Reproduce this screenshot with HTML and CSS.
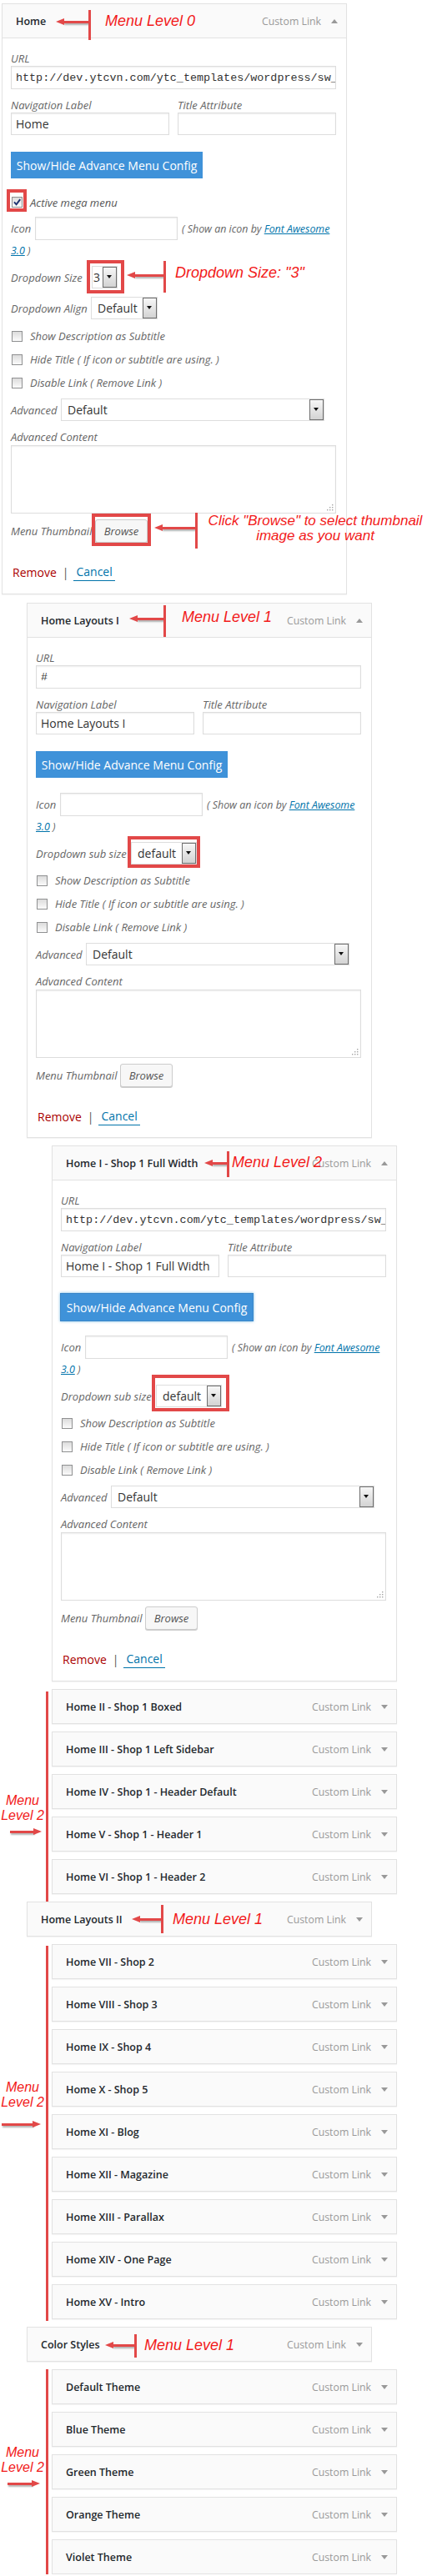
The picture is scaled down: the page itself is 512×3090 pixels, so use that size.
FILE: index.html
```html
<!DOCTYPE html>
<html>
<head>
<meta charset="utf-8">
<title>Menu structure</title>
<link rel="stylesheet" href="styles.css">
</head>
<body>
<div class="menu">

  <div class="item lvl0 open card0">
    <div class="item-head"><span class="item-title">Home</span><span class="item-type">Custom Link</span><span class="toggle up"></span></div>
    <div class="item-body">
      <div class="flabel">URL</div>
      <div class="input url">http://dev.ytcvn.com/ytc_templates/wordpress/sw_emarket/</div>
      <div class="pair">
        <div><div class="flabel">Navigation Label</div><div class="input">Home</div></div>
        <div><div class="flabel">Title Attribute</div><div class="input"></div></div>
      </div>
      <div class="btn-adv">Show/Hide Advance Menu Config</div>
      <div class="check-row mega"><span class="hl-wrap"><span class="cb"><svg viewBox="0 0 11 11" width="11" height="11"><path d="M2 5.4 L4.6 8.3 L9.2 2.2" fill="none" stroke="#1d3270" stroke-width="2"/></svg></span><span class="hl hl-cb"></span></span><span class="cb-text">Active mega menu</span></div>
      <div class="icon-row after-mega"><span class="rlabel w-icon">Icon</span><span class="input icon-input"></span><span class="hint">( Show an icon by <a class="link">Font Awesome</a></span></div>
      <div class="hint-line"><a class="link">3.0</a> )</div>
      <div class="sel-row"><span class="rlabel w-size">Dropdown Size</span><span class="hl-wrap"><span class="select s-size">3<i class="sel-btn"></i></span><span class="hl hl-size"></span></span></div>
      <div class="sel-row align-row"><span class="rlabel w-align">Dropdown Align</span><span class="select s-align">Default<i class="sel-btn"></i></span></div>
      <div class="checks after-align">
        <div class="check-row"><span class="cb"></span><span class="cb-text">Show Description as Subtitle</span></div>
        <div class="check-row"><span class="cb"></span><span class="cb-text">Hide Title ( If icon or subtitle are using. )</span></div>
        <div class="check-row"><span class="cb"></span><span class="cb-text">Disable Link ( Remove Link )</span></div>
      </div>
      <div class="sel-row adv-row"><span class="rlabel w-adv">Advanced</span><span class="select s-adv">Default<i class="sel-btn"></i></span></div>
      <div class="flabel ac-label">Advanced Content</div>
      <div class="textarea"><svg class="grip" viewBox="0 0 8 8" width="8" height="8"><rect x="6" y="0" width="1.4" height="1.4"/><rect x="3" y="3" width="1.4" height="1.4"/><rect x="6" y="3" width="1.4" height="1.4"/><rect x="0" y="6" width="1.4" height="1.4"/><rect x="3" y="6" width="1.4" height="1.4"/><rect x="6" y="6" width="1.4" height="1.4"/></svg></div>
      <div class="thumb-row"><span class="rlabel w-thumb">Menu Thumbnail</span><span class="hl-wrap"><span class="btn-browse">Browse</span><span class="hl hl-browse"></span></span></div>
      <div class="actions"><a class="remove">Remove</a><span class="sep">|</span><a class="cancel">Cancel</a></div>
    </div>
    <span class="arrow a-h0"><i class="shaft"></i></span>
    <span class="note n-h0">Menu Level 0</span>
    <span class="arrow a-size"><i class="shaft"></i></span>
    <span class="note n-size">Dropdown Size: "3"</span>
    <span class="arrow a-browse"><i class="shaft"></i></span>
    <span class="note n-browse">Click "Browse" to select thumbnail<br>image as you want</span>
  </div>

  <div class="item lvl1 open card1">
    <div class="item-head"><span class="item-title">Home Layouts I</span><span class="item-type">Custom Link</span><span class="toggle up"></span></div>
    <div class="item-body">
      <div class="flabel">URL</div>
      <div class="input url">#</div>
      <div class="pair">
        <div><div class="flabel">Navigation Label</div><div class="input">Home Layouts I</div></div>
        <div><div class="flabel">Title Attribute</div><div class="input"></div></div>
      </div>
      <div class="btn-adv">Show/Hide Advance Menu Config</div>
      <div class="icon-row"><span class="rlabel w-icon">Icon</span><span class="input icon-input"></span><span class="hint">( Show an icon by <a class="link">Font Awesome</a></span></div>
      <div class="hint-line"><a class="link">3.0</a> )</div>
      <div class="sel-row"><span class="rlabel w-sub">Dropdown sub size</span><span class="hl-wrap"><span class="select s-sub">default<i class="sel-btn"></i></span><span class="hl hl-sub1"></span></span></div>
      <div class="checks">
        <div class="check-row"><span class="cb"></span><span class="cb-text">Show Description as Subtitle</span></div>
        <div class="check-row"><span class="cb"></span><span class="cb-text">Hide Title ( If icon or subtitle are using. )</span></div>
        <div class="check-row"><span class="cb"></span><span class="cb-text">Disable Link ( Remove Link )</span></div>
      </div>
      <div class="sel-row adv-row"><span class="rlabel w-adv">Advanced</span><span class="select s-adv">Default<i class="sel-btn"></i></span></div>
      <div class="flabel ac-label">Advanced Content</div>
      <div class="textarea"><svg class="grip" viewBox="0 0 8 8" width="8" height="8"><rect x="6" y="0" width="1.4" height="1.4"/><rect x="3" y="3" width="1.4" height="1.4"/><rect x="6" y="3" width="1.4" height="1.4"/><rect x="0" y="6" width="1.4" height="1.4"/><rect x="3" y="6" width="1.4" height="1.4"/><rect x="6" y="6" width="1.4" height="1.4"/></svg></div>
      <div class="thumb-row"><span class="rlabel w-thumb">Menu Thumbnail</span><span class="btn-browse">Browse</span></div>
      <div class="actions"><a class="remove">Remove</a><span class="sep">|</span><a class="cancel">Cancel</a></div>
    </div>
    <span class="arrow a-h1"><i class="shaft"></i></span>
    <span class="note n-h1">Menu Level 1</span>
  </div>

  <div class="item lvl2 open card2">
    <div class="item-head"><span class="item-title">Home I - Shop 1 Full Width</span><span class="item-type">Custom Link</span><span class="toggle up"></span></div>
    <div class="item-body">
      <div class="flabel">URL</div>
      <div class="input url">http://dev.ytcvn.com/ytc_templates/wordpress/sw_emarket/</div>
      <div class="pair">
        <div><div class="flabel">Navigation Label</div><div class="input">Home I - Shop 1 Full Width</div></div>
        <div><div class="flabel">Title Attribute</div><div class="input"></div></div>
      </div>
      <div class="btn-adv focused">Show/Hide Advance Menu Config</div>
      <div class="icon-row"><span class="rlabel w-icon">Icon</span><span class="input icon-input"></span><span class="hint">( Show an icon by <a class="link">Font Awesome</a></span></div>
      <div class="hint-line"><a class="link">3.0</a> )</div>
      <div class="sel-row"><span class="rlabel w-sub">Dropdown sub size</span><span class="hl-wrap"><span class="select s-sub">default<i class="sel-btn"></i></span><span class="hl hl-sub2"></span></span></div>
      <div class="checks">
        <div class="check-row"><span class="cb"></span><span class="cb-text">Show Description as Subtitle</span></div>
        <div class="check-row"><span class="cb"></span><span class="cb-text">Hide Title ( If icon or subtitle are using. )</span></div>
        <div class="check-row"><span class="cb"></span><span class="cb-text">Disable Link ( Remove Link )</span></div>
      </div>
      <div class="sel-row adv-row"><span class="rlabel w-adv">Advanced</span><span class="select s-adv">Default<i class="sel-btn"></i></span></div>
      <div class="flabel ac-label">Advanced Content</div>
      <div class="textarea"><svg class="grip" viewBox="0 0 8 8" width="8" height="8"><rect x="6" y="0" width="1.4" height="1.4"/><rect x="3" y="3" width="1.4" height="1.4"/><rect x="6" y="3" width="1.4" height="1.4"/><rect x="0" y="6" width="1.4" height="1.4"/><rect x="3" y="6" width="1.4" height="1.4"/><rect x="6" y="6" width="1.4" height="1.4"/></svg></div>
      <div class="thumb-row"><span class="rlabel w-thumb">Menu Thumbnail</span><span class="btn-browse">Browse</span></div>
      <div class="actions"><a class="remove">Remove</a><span class="sep">|</span><a class="cancel">Cancel</a></div>
    </div>
    <span class="arrow a-h2"><i class="shaft"></i></span>
    <span class="note n-h2">Menu Level 2</span>
  </div>

  <div class="group g1">
    <span class="side-note sn1">Menu<br>Level 2</span>
    <span class="rarrow ra1"></span>
    <div class="item lvl2"><div class="item-head"><span class="item-title">Home II - Shop 1 Boxed</span><span class="item-type">Custom Link</span><span class="toggle"></span></div></div>
    <div class="item lvl2"><div class="item-head"><span class="item-title">Home III - Shop 1 Left Sidebar</span><span class="item-type">Custom Link</span><span class="toggle"></span></div></div>
    <div class="item lvl2"><div class="item-head"><span class="item-title">Home IV - Shop 1 - Header Default</span><span class="item-type">Custom Link</span><span class="toggle"></span></div></div>
    <div class="item lvl2"><div class="item-head"><span class="item-title">Home V - Shop 1 - Header 1</span><span class="item-type">Custom Link</span><span class="toggle"></span></div></div>
    <div class="item lvl2"><div class="item-head"><span class="item-title">Home VI - Shop 1 - Header 2</span><span class="item-type">Custom Link</span><span class="toggle"></span></div></div>
  </div>

  <div class="item lvl1 layouts2">
    <div class="item-head"><span class="item-title">Home Layouts II</span><span class="item-type">Custom Link</span><span class="toggle"></span></div>
    <span class="arrow a-l2"><i class="shaft"></i></span>
    <span class="note n-l2">Menu Level 1</span>
  </div>

  <div class="group g2">
    <span class="side-note sn2">Menu<br>Level 2</span>
    <span class="rarrow ra2"></span>
    <div class="item lvl2"><div class="item-head"><span class="item-title">Home VII - Shop 2</span><span class="item-type">Custom Link</span><span class="toggle"></span></div></div>
    <div class="item lvl2"><div class="item-head"><span class="item-title">Home VIII - Shop 3</span><span class="item-type">Custom Link</span><span class="toggle"></span></div></div>
    <div class="item lvl2"><div class="item-head"><span class="item-title">Home IX - Shop 4</span><span class="item-type">Custom Link</span><span class="toggle"></span></div></div>
    <div class="item lvl2"><div class="item-head"><span class="item-title">Home X - Shop 5</span><span class="item-type">Custom Link</span><span class="toggle"></span></div></div>
    <div class="item lvl2"><div class="item-head"><span class="item-title">Home XI - Blog</span><span class="item-type">Custom Link</span><span class="toggle"></span></div></div>
    <div class="item lvl2"><div class="item-head"><span class="item-title">Home XII - Magazine</span><span class="item-type">Custom Link</span><span class="toggle"></span></div></div>
    <div class="item lvl2"><div class="item-head"><span class="item-title">Home XIII - Parallax</span><span class="item-type">Custom Link</span><span class="toggle"></span></div></div>
    <div class="item lvl2"><div class="item-head"><span class="item-title">Home XIV - One Page</span><span class="item-type">Custom Link</span><span class="toggle"></span></div></div>
    <div class="item lvl2"><div class="item-head"><span class="item-title">Home XV - Intro</span><span class="item-type">Custom Link</span><span class="toggle"></span></div></div>
  </div>

  <div class="item lvl1 colors">
    <div class="item-head"><span class="item-title">Color Styles</span><span class="item-type">Custom Link</span><span class="toggle"></span></div>
    <span class="arrow a-cs"><i class="shaft"></i></span>
    <span class="note n-cs">Menu Level 1</span>
  </div>

  <div class="group g3">
    <span class="side-note sn3">Menu<br>Level 2</span>
    <span class="rarrow ra3"></span>
    <div class="item lvl2"><div class="item-head"><span class="item-title">Default Theme</span><span class="item-type">Custom Link</span><span class="toggle"></span></div></div>
    <div class="item lvl2"><div class="item-head"><span class="item-title">Blue Theme</span><span class="item-type">Custom Link</span><span class="toggle"></span></div></div>
    <div class="item lvl2"><div class="item-head"><span class="item-title">Green Theme</span><span class="item-type">Custom Link</span><span class="toggle"></span></div></div>
    <div class="item lvl2"><div class="item-head"><span class="item-title">Orange Theme</span><span class="item-type">Custom Link</span><span class="toggle"></span></div></div>
    <div class="item lvl2"><div class="item-head"><span class="item-title">Violet Theme</span><span class="item-type">Custom Link</span><span class="toggle"></span></div></div>
  </div>

</div>
</body>
</html>
```

FILE: styles.css
```css
* { box-sizing: border-box; }

body {
  margin: 0;
  background: #fff;
  font-family: "Open Sans", "Liberation Sans", sans-serif;
  color: #333;
}

.menu {
  width: 512px;
  padding-top: 4px;
}

/* ---------- menu item card ---------- */
.item {
  position: relative;
  width: 414px;
  margin-top: 9px;
  border: 1px solid #e2e2e2;
  background: #fff;
  box-shadow: 0 1px 1px rgba(0, 0, 0, 0.04);
}
.card0 { margin-top: 0; }
.card1 { margin-top: 10px; }

.lvl0 { margin-left: 2px; }
.lvl1 { margin-left: 32px; }
.lvl2 { margin-left: 62px; }

.item-head {
  height: 40px;
  display: flex;
  align-items: center;
  padding: 0 10px 0 16px;
  background: #fafafa;
}
.open > .item-head {
  height: 41px;
  border-bottom: 1px solid #e2e2e2;
}
.item-title {
  flex: 1;
  font-size: 12.5px;
  font-weight: 600;
  color: #23282d;
  white-space: nowrap;
}
.item-type {
  font-size: 12.3px;
  color: #999;
  white-space: nowrap;
}
.toggle {
  width: 0;
  height: 0;
  margin-left: 12px;
  border-left: 4px solid transparent;
  border-right: 4px solid transparent;
  border-top: 5px solid #999;
}
.toggle.up {
  border-top: 0;
  border-bottom: 5px solid #999;
}

/* ---------- body / settings ---------- */
.item-body {
  padding: 15px 12px 16px 10px;
}
.card0 .item-body,
.card2 .item-body { padding-bottom: 17px; }

.flabel {
  height: 18px;
  line-height: 18px;
  font-size: 13px;
  font-style: italic;
  color: #666;
  white-space: nowrap;
}

.input {
  height: 28px;
  display: flex;
  align-items: center;
  padding: 0 5px;
  border: 1px solid #ddd;
  background: #fff;
  box-shadow: inset 0 1px 2px rgba(0, 0, 0, 0.07);
  font-size: 14px;
  color: #333;
  white-space: nowrap;
  overflow: hidden;
}
.input.url {
  font-family: "Liberation Mono", "DejaVu Sans Mono", monospace;
  font-size: 13.4px;
}

.pair {
  display: grid;
  grid-template-columns: 190px 190px;
  column-gap: 10px;
  margin-top: 10px;
}
.pair .input { height: 27px; }

.btn-adv {
  width: 230px;
  height: 32px;
  margin-top: 20px;
  display: flex;
  align-items: center;
  justify-content: center;
  background: #3f92d9;
  color: #fff;
  font-size: 14px;
  white-space: nowrap;
}
.btn-adv.focused {
  box-shadow: 0 0 0 1px #3a86c8, 0 0 3px 1px rgba(30, 140, 210, 0.6);
}

.rlabel {
  flex: none;
  font-size: 13px;
  font-style: italic;
  color: #666;
  white-space: nowrap;
}
.w-icon { width: 29px; }
.w-size { width: 97px; }
.w-align { width: 96px; }
.w-sub { width: 114px; }
.w-adv { width: 60px; }
.w-thumb { width: 101px; }

/* checkboxes */
.check-row {
  height: 28px;
  display: flex;
  align-items: center;
}
.check-row.mega {
  height: 21px;
  margin-top: 18px;
}
.cb {
  flex: none;
  width: 13px;
  height: 13px;
  margin-left: 1px;
  border: 1px solid #8f9091;
  background: linear-gradient(#dcdcdc, #fbfbfb);
  display: flex;
  align-items: center;
  justify-content: center;
}
.cb-text {
  margin-left: 9px;
  font-size: 13px;
  font-style: italic;
  color: #666;
  white-space: nowrap;
}
.mega .cb-text { color: #555; }
.checks { margin-top: 5px; }
.checks.after-align { margin-top: 6px; }

/* icon row */
.icon-row {
  height: 28px;
  margin-top: 18px;
  display: flex;
  align-items: center;
}
.icon-row.after-mega { margin-top: 7px; }
.icon-input {
  width: 171px;
  flex: none;
}
.hint {
  margin-left: 5px;
  font-size: 12.4px;
  font-style: italic;
  color: #666;
  white-space: nowrap;
}
.hint-line {
  height: 18px;
  margin-top: 4px;
  line-height: 18px;
  font-size: 12.4px;
  font-style: italic;
  color: #666;
}
.link {
  color: #0073aa;
  text-decoration: underline;
}

/* selects */
.sel-row {
  height: 27px;
  margin-top: 9px;
  display: flex;
  align-items: center;
}
.align-row { margin-top: 10px; }
.adv-row { margin-top: 5px; }

.select {
  position: relative;
  height: 27px;
  display: flex;
  align-items: center;
  padding-left: 7px;
  border: 1px solid #ddd;
  background: #fff;
  font-size: 14px;
  color: #333;
  white-space: nowrap;
}
.s-size { width: 31px; padding-left: 1px; }
.s-align { width: 80px; }
.s-sub { width: 79px; }
.s-adv { width: 316px; }

.sel-btn {
  position: absolute;
  right: 0;
  top: 0;
  bottom: 0;
  width: 17px;
  border: 1px solid #6e6e6e;
  background: linear-gradient(#f7f7f7, #d3d3d3);
}
.sel-btn::after {
  content: "";
  position: absolute;
  left: 4px;
  top: 9px;
  border-left: 3.5px solid transparent;
  border-right: 3.5px solid transparent;
  border-top: 4px solid #111;
}

/* textarea */
.ac-label { margin-top: 10px; }
.textarea {
  position: relative;
  height: 82px;
  margin-top: 1px;
  border: 1px solid #ddd;
  box-shadow: inset 0 1px 2px rgba(0, 0, 0, 0.07);
}
.grip {
  position: absolute;
  right: 2px;
  bottom: 2px;
  fill: #a5a5a5;
}

/* thumbnail */
.thumb-row {
  height: 28px;
  margin-top: 7px;
  display: flex;
  align-items: center;
}
.btn-browse {
  width: 63px;
  height: 28px;
  display: flex;
  align-items: center;
  justify-content: center;
  border: 1px solid #ccc;
  border-radius: 3px;
  background: #f7f7f7;
  box-shadow: 0 1px 0 #ccc;
  font-size: 13px;
  font-style: italic;
  color: #555;
}

/* actions */
.actions {
  height: 18px;
  margin-top: 26px;
  padding-left: 2px;
  display: flex;
  align-items: center;
  font-size: 14px;
}
.remove { color: #a00; }
.sep { margin: 0 6px 0 7px; color: #555; }
.cancel {
  padding: 0 3px 1px;
  color: #0073aa;
  border-bottom: 1px solid #0073aa;
}

/* ---------- annotations (drawn over the UI) ---------- */
.hl-wrap {
  position: relative;
  display: inline-flex;
  flex: none;
}
.hl {
  position: absolute;
  border: 4px solid #e24848;
}
.hl-cb { top: -9px; left: -5px; right: -5px; bottom: -5px; }
.hl-size { top: -7px; left: -6px; right: -8px; bottom: -6px; }
.hl-sub1 { top: -7px; left: -4px; right: -4px; bottom: -4px; }
.hl-sub2 { top: -12px; left: -5px; right: -9px; bottom: -5px; }
.hl-browse { top: -7px; left: -4px; right: -4px; bottom: -4px; }

.note {
  position: absolute;
  font-family: "Liberation Sans", Arial, sans-serif;
  font-style: italic;
  font-size: 18px;
  line-height: 18px;
  color: #f21a1a;
  white-space: nowrap;
}
.n-h0 { left: 123px; top: 11px; }
.n-size { left: 207px; top: 313px; }
.n-browse { left: 246px; top: 611px; width: 258px; text-align: center; font-size: 17px; }
.n-h1 { left: 185px; top: 7px; }
.n-h2 { left: 215px; top: 10px; }
.n-l2 { left: 174px; top: 11px; }
.n-cs { left: 140px; top: 12px; }

/* left-pointing arrow with a vertical bar at its tail */
.arrow { position: absolute; }
.arrow::after {
  content: "";
  position: absolute;
  right: 0;
  top: 0;
  bottom: 0;
  width: 3px;
  background: #e24848;
}
.shaft {
  position: absolute;
  left: 9px;
  right: 3px;
  height: 3px;
  background: #e24848;
  box-shadow: 1px 2px 2px rgba(0, 0, 0, 0.3);
}
.shaft::before {
  content: "";
  position: absolute;
  left: -9px;
  top: -3px;
  border-right: 10px solid #e24848;
  border-top: 4.5px solid transparent;
  border-bottom: 4.5px solid transparent;
}
.a-h0 { left: 64px; top: 7px; width: 42px; height: 36px; }
.a-h0 .shaft { top: 13px; }
.a-size { left: 149px; top: 308px; width: 47px; height: 38px; }
.a-size .shaft { top: 16px; }
.a-browse { left: 182px; top: 610px; width: 52px; height: 43px; }
.a-browse .shaft { top: 17px; }
.a-h1 { left: 122px; top: 2px; width: 44px; height: 38px; }
.a-h1 .shaft { top: 15px; }
.a-h2 { left: 182px; top: 6px; width: 30px; height: 31px; }
.a-h2 .shaft { top: 13px; }
.a-l2 { left: 125px; top: 3px; width: 38px; height: 34px; }
.a-l2 .shaft { top: 16px; }
.a-cs { left: 93px; top: 8px; width: 38px; height: 28px; }
.a-cs .shaft { top: 12px; }

/* level-2 groups with bracket bar on the left */
.group { position: relative; }
.group::before {
  content: "";
  position: absolute;
  left: 55px;
  width: 3px;
  background: #e24848;
}
.g1::before { top: 3px; bottom: -14px; }
.g2::before { top: 2px; bottom: -2px; }
.g3::before { top: 0; bottom: 0; }

.side-note {
  position: absolute;
  left: 0;
  width: 54px;
  text-align: center;
  font-family: "Liberation Sans", Arial, sans-serif;
  font-style: italic;
  font-size: 16px;
  line-height: 18px;
  color: #f21a1a;
}
.sn1 { top: 125px; }
.sn2 { top: 163px; }
.sn3 { top: 91px; }

.rarrow {
  position: absolute;
  height: 9px;
}
.rarrow::before {
  content: "";
  position: absolute;
  left: 0;
  right: 9px;
  top: 3px;
  height: 3px;
  background: #e24848;
  box-shadow: 1px 2px 2px rgba(0, 0, 0, 0.3);
}
.rarrow::after {
  content: "";
  position: absolute;
  right: 0;
  top: 0;
  border-left: 10px solid #e24848;
  border-top: 4.5px solid transparent;
  border-bottom: 4.5px solid transparent;
}
.ra1 { left: 12px; top: 167px; width: 38px; }
.ra2 { left: 2px; top: 212px; width: 47px; }
.ra3 { left: 9px; top: 133px; width: 39px; }
```
